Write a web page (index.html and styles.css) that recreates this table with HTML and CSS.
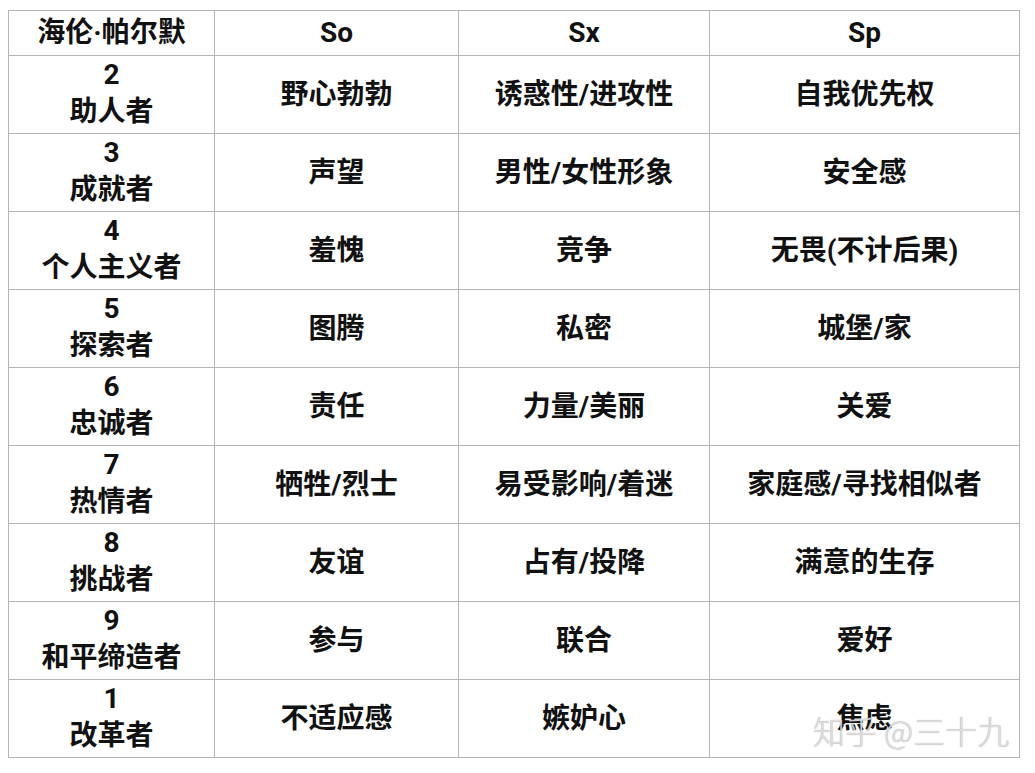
FILE: index.html
```html
<!DOCTYPE html>
<html lang="zh-CN">
<head>
<meta charset="utf-8">
<title>海伦·帕尔默</title>
<link rel="stylesheet" href="styles.css">
</head>
<body>
<div class="wrap">
<table class="grid">
  <colgroup>
    <col class="c1"><col class="c2"><col class="c3"><col class="c4">
  </colgroup>
  <thead>
    <tr class="head">
      <th>海伦·帕尔默</th><th>So</th><th>Sx</th><th>Sp</th>
    </tr>
  </thead>
  <tbody>
    <tr><td class="type"><span>2</span><span>助人者</span></td><td>野心勃勃</td><td>诱惑性/进攻性</td><td>自我优先权</td></tr>
    <tr><td class="type"><span>3</span><span>成就者</span></td><td>声望</td><td>男性/女性形象</td><td>安全感</td></tr>
    <tr><td class="type"><span>4</span><span>个人主义者</span></td><td>羞愧</td><td>竞争</td><td>无畏(不计后果)</td></tr>
    <tr><td class="type"><span>5</span><span>探索者</span></td><td>图腾</td><td>私密</td><td>城堡/家</td></tr>
    <tr><td class="type"><span>6</span><span>忠诚者</span></td><td>责任</td><td>力量/美丽</td><td>关爱</td></tr>
    <tr><td class="type"><span>7</span><span>热情者</span></td><td>牺牲/烈士</td><td>易受影响/着迷</td><td>家庭感/寻找相似者</td></tr>
    <tr><td class="type"><span>8</span><span>挑战者</span></td><td>友谊</td><td>占有/投降</td><td>满意的生存</td></tr>
    <tr><td class="type"><span>9</span><span>和平缔造者</span></td><td>参与</td><td>联合</td><td>爱好</td></tr>
    <tr><td class="type"><span>1</span><span>改革者</span></td><td>不适应感</td><td>嫉妒心</td><td>焦虑</td></tr>
  </tbody>
</table>
<div class="watermark">知乎 @三十九</div>
</div>
</body>
</html>
```
FILE: styles.css
```css
html, body {
  margin: 0;
  padding: 0;
  background: #ffffff;
}
body {
  font-family: Roboto, "Noto Sans CJK SC", "Noto Sans", sans-serif;
  color: #111111;
}
.wrap {
  position: relative;
  padding: 10px 0 0 8px;
  width: 1027px;
}
.grid {
  border-collapse: collapse;
  table-layout: fixed;
  width: 1011px;
}
.c1 { width: 206px; }
.c2 { width: 244px; }
.c3 { width: 251px; }
.c4 { width: 310px; }
.grid th,
.grid td {
  border: 1px solid #b4b4b4;
  padding: 0;
  text-align: center;
  vertical-align: middle;
  font-weight: 700;
  font-size: 28px;
  line-height: 36px;
}
.head th {
  height: 44px;
}
.grid tbody td {
  height: 77px;
}
.grid td.type span {
  display: block;
  line-height: 37px;
}
.grid td.type span:first-child {
  margin-top: -4px;
}
.watermark {
  position: absolute;
  left: 813px;
  top: 708px;
  font-family: "Noto Sans CJK SC", sans-serif;
  font-weight: 300;
  font-size: 32px;
  line-height: 44px;
  color: rgba(235, 235, 235, 0.85);
  text-shadow: 0 0 1px rgba(90, 90, 90, 0.7);
  white-space: nowrap;
}
```
